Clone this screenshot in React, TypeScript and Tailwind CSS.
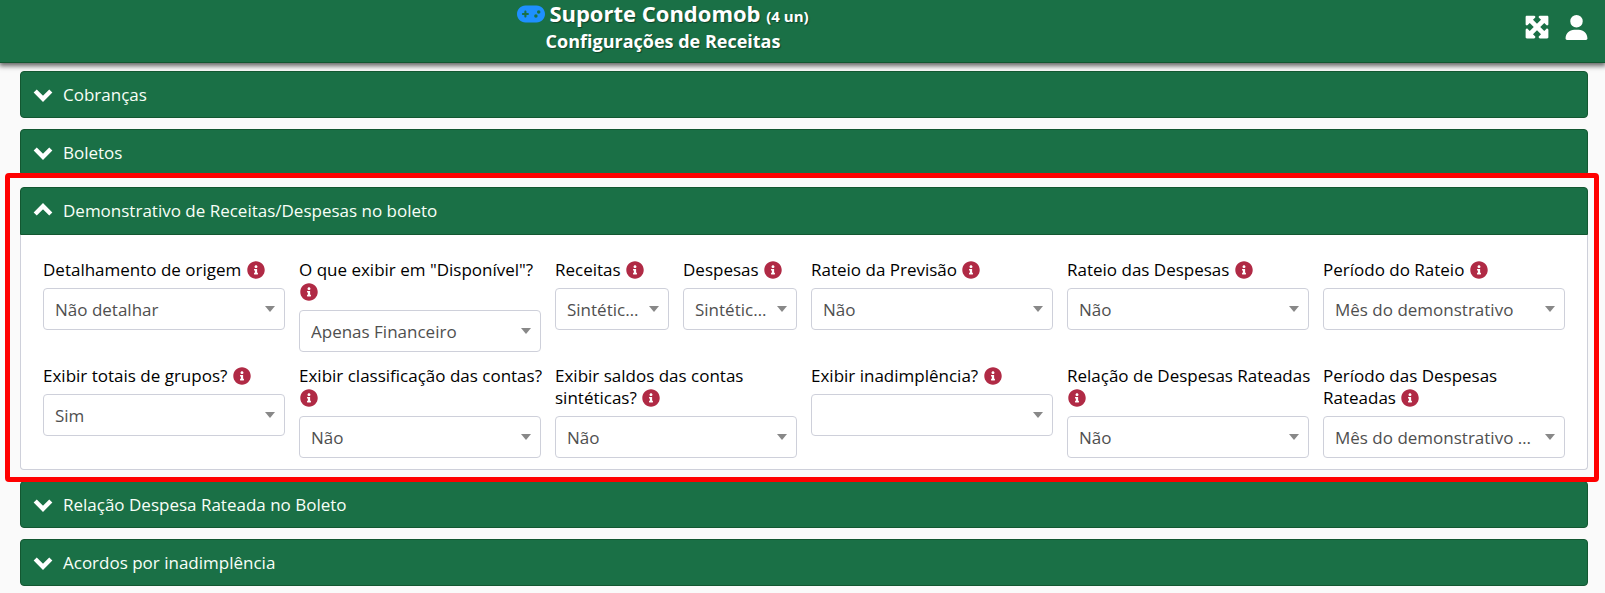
import { useId, type ReactNode } from "react";
import { FaInfoCircle } from "react-icons/fa";
import { FaGamepad, FaMaximize, FaUser } from "react-icons/fa6";

type FieldProps = {
  label: string;
  value: string;
  narrow?: boolean;
};

const fields: FieldProps[] = [
  { label: "Detalhamento de origem", value: "Não detalhar" },
  { label: 'O que exibir em "Disponível"?', value: "Apenas Financeiro" },
  { label: "Receitas", value: "Sintéticas", narrow: true },
  { label: "Despesas", value: "Sintéticas", narrow: true },
  { label: "Rateio da Previsão", value: "Não" },
  { label: "Rateio das Despesas", value: "Não" },
  { label: "Período do Rateio", value: "Mês do demonstrativo" },
  { label: "Exibir totais de grupos?", value: "Sim" },
  { label: "Exibir classificação das contas?", value: "Não" },
  { label: "Exibir saldos das contas sintéticas?", value: "Não" },
  { label: "Exibir inadimplência?", value: "" },
  { label: "Relação de Despesas Rateadas", value: "Não" },
  { label: "Período das Despesas Rateadas", value: "Mês do demonstrativo do boleto" },
];

function Chevron({ open }: { open: boolean }) {
  return (
    <svg viewBox="0 0 20 16" className="w-5 h-4 shrink-0" fill="none" stroke="white" strokeWidth="4.4">
      <path d={open ? "M2.2 11 L10 3.2 L17.8 11" : "M2.2 4 L10 11.8 L17.8 4"} />
    </svg>
  );
}

function Field({ label, value, narrow }: FieldProps) {
  const id = useId();

  return (
    <div className={narrow ? "col-span-1 min-w-0" : "col-span-2 min-w-0"}>
      <label htmlFor={id} className="block mb-[7px] -mr-2 text-[17px] leading-[22px] text-black">
        {label} <FaInfoCircle className="inline-block align-[-3px] ml-px size-[18px] text-[#b02a45]" />
      </label>
      <div className="relative">
        <select
          id={id}
          defaultValue={value}
          className="block w-full h-[42px] pt-0.5 pl-[11px] pr-7 appearance-none truncate rounded border border-[#ced0da] bg-white text-[17px] text-[#4f4f4f]"
        >
          <option value={value}>{value}</option>
        </select>
        <svg viewBox="0 0 10 6" className="absolute right-[10px] top-[18px] w-[10px] h-[6px] pointer-events-none" fill="#888888">
          <path d="M0 0h10L5 6z" />
        </svg>
      </div>
    </div>
  );
}

function Section({ title, children }: { title: string; children?: ReactNode }) {
  const open = Boolean(children);

  return (
    <section className="relative">
      <button
        type="button"
        aria-expanded={open}
        className={`flex items-center gap-2.5 w-full px-3 border border-[#135731] bg-[#1a7046] text-left text-[17px] text-[#f8fff8] ${
          open ? "h-12 rounded-t" : "h-[47px] rounded"
        }`}
      >
        <Chevron open={open} />
        {title}
      </button>
      {children}
    </section>
  );
}

export default function App() {
  return (
    <div className="min-h-screen bg-[#fafafa] font-['Open_Sans','Noto_Sans',sans-serif]">
      {/* Top bar */}
      <header className="relative flex h-[63px] border-b border-[#135731] bg-[#1a7046] text-white shadow-[0_2px_5px_1px_rgba(0,0,0,0.6)]">
        <div className="flex-1 text-center font-bold text-shadow-[1px_1px_1px_rgba(0,0,0,0.4)]">
          <h1 className="text-[22px] leading-[26px]">
            <FaGamepad className="inline-block align-[-6px] mr-1 size-7 text-[#1e90ff]" />
            Suporte Condomob <span className="text-[15px]">(4 un)</span>
          </h1>
          <h2 className="text-lg leading-6">Configurações de Receitas</h2>
        </div>
        <div className="flex items-center justify-end gap-3.5 w-[279px] pr-4 pb-2">
          <button type="button" aria-label="Tela cheia">
            <FaMaximize className="size-[26px]" />
          </button>
          <button type="button" aria-label="Usuário">
            <FaUser className="size-[25px]" />
          </button>
        </div>
      </header>

      <main className="flex flex-col gap-[11px] pt-2 pb-[7px] pl-5 pr-[17px]">
        <Section title="Cobranças" />
        <Section title="Boletos" />
        <Section title="Demonstrativo de Receitas/Despesas no boleto">
          <div className="grid grid-cols-12 gap-x-[14px] gap-y-[13px] px-[22px] pt-6 pb-[11px] rounded-b border border-t-0 border-[#ced0da] bg-white">
            {fields.map((field) => (
              <Field key={field.label} {...field} />
            ))}
          </div>
          {/* Highlight */}
          <div className="absolute -top-[14px] -bottom-3 -left-[15px] -right-[11px] z-10 rounded-sm border-[5px] border-[#ff0000] pointer-events-none" />
        </Section>
        <Section title="Relação Despesa Rateada no Boleto" />
        <Section title="Acordos por inadimplência" />
      </main>
    </div>
  );
}
